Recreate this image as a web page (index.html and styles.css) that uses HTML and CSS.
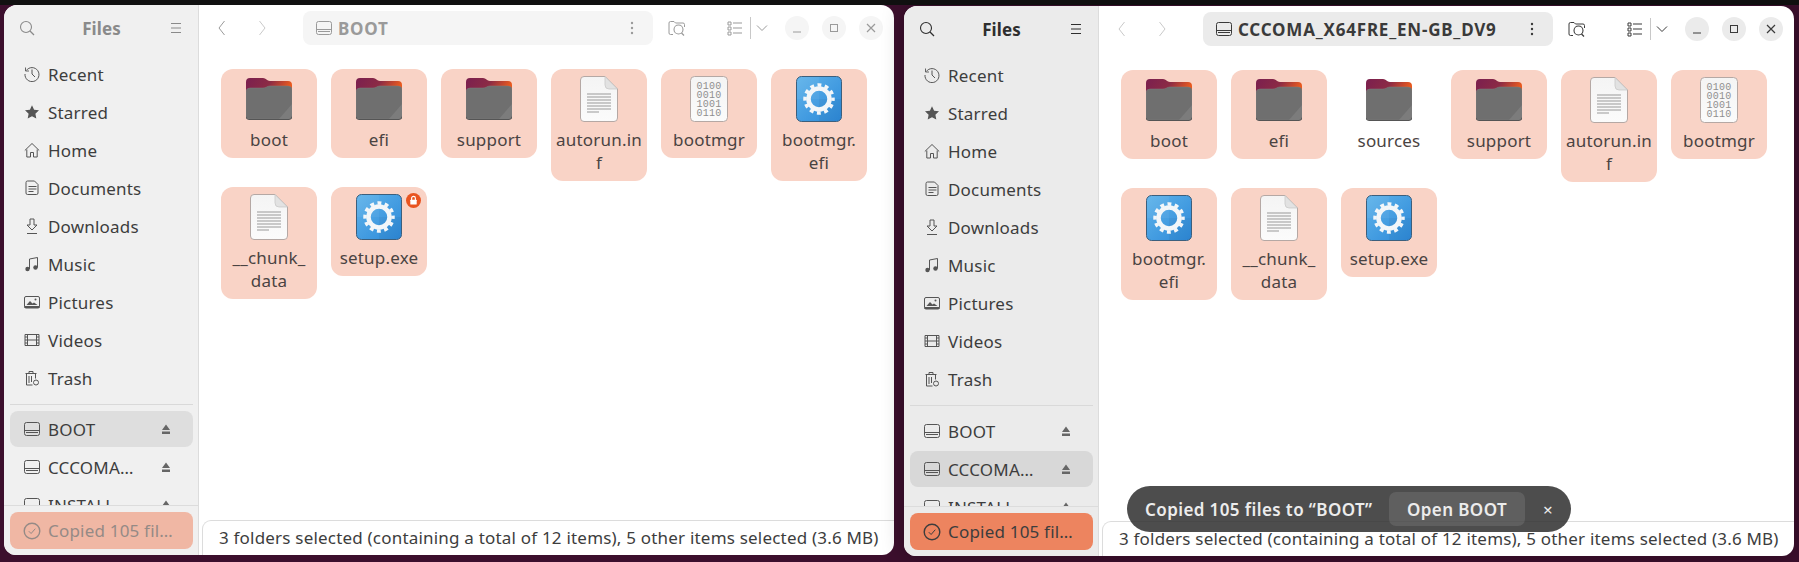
FILE: index.html
```html
<!DOCTYPE html>
<html lang="en">
<head>
    <meta charset="UTF-8">
    <meta name="viewport" content="width=device-width, initial-scale=1.0">
    <title>Files</title>
    <link rel="stylesheet" href="styles.css">
</head>
<body>
    <!-- shared icons -->
    <svg class="defs" width="0" height="0">
        <defs>
            <linearGradient id="folderBack" x1="0" y1="0" x2="1" y2="0.25">
                <stop offset="0" stop-color="#7a1f4f"/>
                <stop offset="0.55" stop-color="#8c2b45"/>
                <stop offset="1" stop-color="#ea5a1e"/>
            </linearGradient>
            <linearGradient id="gearBg" x1="0" y1="0" x2="1" y2="1">
                <stop offset="0" stop-color="#5fb3ea"/>
                <stop offset="1" stop-color="#2c89d9"/>
            </linearGradient>
            <linearGradient id="paper" x1="0" y1="0" x2="0" y2="1">
                <stop offset="0" stop-color="#f4f4f4"/>
                <stop offset="1" stop-color="#fbfbfb"/>
            </linearGradient>
        </defs>
        <symbol id="i-folder" viewBox="0 0 46 42">
            <path d="M0 4a4 4 0 0 1 4-4h13c3 0 4 3 7 3h18a4 4 0 0 1 4 4v12H0z" fill="url(#folderBack)"/>
            <path d="M0 14a4 4 0 0 1 4-4h13c3 0 4-2 7-2h18a4 4 0 0 1 4 4v26a3 3 0 0 1-3 3H3a3 3 0 0 1-3-3z" fill="#6f6f6f" stroke="#7d7d7d" stroke-width=".5"/>
            <path d="M46 26v12a3 3 0 0 1-3 3H33z" fill="#7c7c7c"/>
            <path d="M0 38.500a3 3 0 0 0 3 3h40a3 3 0 0 0 3-3" fill="none" stroke="#555" stroke-width="1"/>
        </symbol>
        <symbol id="i-text" viewBox="0 0 38 46">
            <path d="M4 .5h21L37.500 13v29a3.500 3.500 0 0 1-3.500 3.500H4A3.500 3.500 0 0 1 .5 42V4A3.500 3.500 0 0 1 4 .5z" fill="url(#paper)" stroke="#b5a8a4"/>
            <path d="M25 .5V9a4 4 0 0 0 4 4h8.500z" fill="#e2e2e2" stroke="#c4c4c4" stroke-width=".7"/>
            <path d="M7 18h24M7 21h24M7 24h24M7 27h24M7 30h24M7 33h24M7 36h12" stroke="#999" stroke-width="1"/>
        </symbol>
        <symbol id="i-sheet" viewBox="0 0 38 46">
            <rect x=".5" y=".5" width="37" height="45" rx="4" fill="url(#paper)" stroke="#b5a8a4"/>
        </symbol>
        <symbol id="i-exe" viewBox="0 0 46 46">
            <rect x=".5" y=".5" width="45" height="45" rx="5" fill="url(#gearBg)" stroke="#3c5f7d"/>
            <path d="M23 1v22H1V6a5 5 0 0 1 5-5z" fill="#fff" opacity=".05"/>
            <path d="M23 23h22v17a5 5 0 0 1-5 5H23z" fill="#000" opacity=".04"/>
            <circle cx="23" cy="23" r="10.500" fill="none" stroke="#f2f6f9" stroke-width="4.500"/>
            <circle cx="23" cy="23" r="14" fill="none" stroke="#f2f6f9" stroke-width="3.500" stroke-dasharray="3.900 3.430" stroke-dashoffset="1.950"/>
        </symbol>
        <symbol id="i-search" viewBox="0 0 16 16"><circle cx="7" cy="7" r="5.500" fill="none" stroke="currentColor" stroke-width="1.100"/><path d="M11 11l4 4" stroke="currentColor" stroke-width="1.300"/></symbol>
        <symbol id="i-menu" viewBox="0 0 16 16"><path d="M3 3.500h10M3 8h10M3 12.500h10" stroke="currentColor" stroke-width="1.100"/></symbol>
        <symbol id="i-recent" viewBox="0 0 16 16"><path d="M2.300 4.500A7 7 0 1 1 1 8" fill="none" stroke="currentColor"/><path d="M1.500 1.500v3.500H5" fill="none" stroke="currentColor" stroke-width=".9"/><path d="M8 3.500V8l3 3" fill="none" stroke="currentColor"/></symbol>
        <symbol id="i-star" viewBox="0 0 16 16"><path d="M8 1.200l2.100 4.500 4.900.6-3.600 3.400.9 4.900L8 12.200l-4.300 2.400.9-4.900L1 6.300l4.900-.6z" fill="currentColor"/></symbol>
        <symbol id="i-home" viewBox="0 0 16 16"><path d="M.8 8.500L8 1.500l7.200 7M2.800 7.500v7.500h3.700v-4.500h3V15h3.700V7.500" fill="none" stroke="currentColor"/></symbol>
        <symbol id="i-doc" viewBox="0 0 16 16"><path d="M3 1.500h7l3.500 3.500v8.500a1.500 1.500 0 0 1-1.500 1.500H3a1.500 1.500 0 0 1-1.500-1.500V3A1.500 1.500 0 0 1 3 1.500zM4 7h8M4 9.500h8M4 12h5" fill="none" stroke="currentColor" transform="translate(.5 -.5)"/></symbol>
        <symbol id="i-download" viewBox="0 0 16 16"><path d="M6 1h4v6h3l-5 5-5-5h3zM3 15.500h10" fill="none" stroke="currentColor"/></symbol>
        <symbol id="i-music" viewBox="0 0 16 16"><path d="M5.500 13V3l8-1.500V11.500" fill="none" stroke="currentColor"/><circle cx="3.500" cy="13" r="2.200" fill="currentColor"/><circle cx="11.500" cy="11.500" r="2.200" fill="currentColor"/></symbol>
        <symbol id="i-picture" viewBox="0 0 16 16"><rect x=".5" y="2.500" width="15" height="11.500" rx="1.500" fill="none" stroke="currentColor"/><path d="M2.500 11l3.500-4 2.500 2.500 1.500-1 3.500 2.500zM.5 12h15v2H.5z" fill="currentColor"/><circle cx="11.500" cy="5.500" r="1" fill="currentColor"/></symbol>
        <symbol id="i-video" viewBox="0 0 16 16"><path d="M1 2.500h14v11H1zM3.500 2.500v11M12.500 2.500v11M3.500 8h9M1 5h2.500M1 8h2.500M1 11h2.500M12.500 5H15M12.500 8H15M12.500 11H15" fill="none" stroke="currentColor"/></symbol>
        <symbol id="i-trash" viewBox="0 0 16 16"><path d="M1.500 3.500h11M5 3.500V1.500h4v2M2.500 3.500v11.500h6M11.500 3.500v5M5 6v7M7.500 6v6" fill="none" stroke="currentColor"/><circle cx="12" cy="12.500" r="2.500" fill="none" stroke="currentColor"/></symbol>
        <symbol id="i-drive" viewBox="0 0 16 16"><path d="M2.500 1.500h11a2 2 0 0 1 2 2v9a2 2 0 0 1-2 2h-11a2 2 0 0 1-2-2v-9a2 2 0 0 1 2-2zM.5 9.500h15M2 11.500h12" fill="none" stroke="currentColor"/></symbol>
        <symbol id="i-eject" viewBox="0 0 16 16"><path d="M8 3.500l4 5.500H4zM4 10.500h8V13H4z" fill="currentColor"/></symbol>
        <symbol id="i-check" viewBox="0 0 18 18"><circle cx="9" cy="9" r="7.800" fill="none" stroke="currentColor" stroke-width="1.400"/><path d="M5.800 9.200l2.300 2.300 4.200-4.800" fill="none" stroke="currentColor"/></symbol>
        <symbol id="i-back" viewBox="0 0 16 16"><path d="M10.500 1L5 8l5.500 7" fill="none" stroke="currentColor"/></symbol>
        <symbol id="i-forward" viewBox="0 0 16 16"><path d="M5.500 1L11 8l-5.500 7" fill="none" stroke="currentColor"/></symbol>
        <symbol id="i-more" viewBox="0 0 16 16"><circle cx="8" cy="3" r="1.200" fill="currentColor"/><circle cx="8" cy="8" r="1.200" fill="currentColor"/><circle cx="8" cy="13" r="1.200" fill="currentColor"/></symbol>
        <symbol id="i-camera" viewBox="0 0 18 16"><path d="M5 14.500H2.500a1.500 1.500 0 0 1-1.500-1.500V3a1.500 1.500 0 0 1 1.500-1.500h3.500l1.500 1.500h7.500a1.500 1.500 0 0 1 1.500 1.500V7" fill="none" stroke="currentColor"/><circle cx="10.500" cy="9.500" r="4.500" fill="none" stroke="currentColor" stroke-width="1.100"/><path d="M13.500 13l2.500 2.500" stroke="currentColor" stroke-width="1.300"/></symbol>
        <symbol id="i-list" viewBox="0 0 16 16"><path d="M1 2h3v3H1zM1 7h3v3H1zM1 12h3v3H1z" fill="none" stroke="currentColor" stroke-width="1"/><path d="M6 3h9M6 8h9M6 13h9" stroke="currentColor" stroke-width="1.100"/></symbol>
        <symbol id="i-chevron" viewBox="0 0 16 16"><path d="M3 5.500l5 5 5-5" fill="none" stroke="currentColor"/></symbol>
    </svg>

    <div class="topbar"></div>
    <div class="desktop">

        <!-- left window, not focused -->
        <section class="window inactive">
            <aside class="sidebar">
                <div class="side-head">
                    <svg class="ico"><use href="#i-search"/></svg>
                    <span class="app-title">Files</span>
                    <svg class="ico"><use href="#i-menu"/></svg>
                </div>
                <nav class="places">
                    <a class="place"><svg class="ico"><use href="#i-recent"/></svg><span>Recent</span></a>
                    <a class="place"><svg class="ico"><use href="#i-star"/></svg><span>Starred</span></a>
                    <a class="place"><svg class="ico"><use href="#i-home"/></svg><span>Home</span></a>
                    <a class="place"><svg class="ico"><use href="#i-doc"/></svg><span>Documents</span></a>
                    <a class="place"><svg class="ico"><use href="#i-download"/></svg><span>Downloads</span></a>
                    <a class="place"><svg class="ico"><use href="#i-music"/></svg><span>Music</span></a>
                    <a class="place"><svg class="ico"><use href="#i-picture"/></svg><span>Pictures</span></a>
                    <a class="place"><svg class="ico"><use href="#i-video"/></svg><span>Videos</span></a>
                    <a class="place"><svg class="ico"><use href="#i-trash"/></svg><span>Trash</span></a>
                    <hr class="side-sep">
                    <a class="place current"><svg class="ico"><use href="#i-drive"/></svg><span>BOOT</span><svg class="ico eject"><use href="#i-eject"/></svg></a>
                    <a class="place"><svg class="ico"><use href="#i-drive"/></svg><span>CCCOMA…</span><svg class="ico eject"><use href="#i-eject"/></svg></a>
                    <a class="place"><svg class="ico"><use href="#i-drive"/></svg><span>INSTALL</span><svg class="ico eject"><use href="#i-eject"/></svg></a>
                </nav>
                <div class="side-foot">
                    <div class="progress"><svg class="ico-check"><use href="#i-check"/></svg><span>Copied 105 fil…</span></div>
                </div>
            </aside>
            <main class="content">
                <header class="toolbar">
                    <svg class="ico nav-back"><use href="#i-back"/></svg>
                    <svg class="ico nav-forward"><use href="#i-forward"/></svg>
                    <div class="pathbar">
                        <svg class="ico"><use href="#i-drive"/></svg>
                        <span class="path-name">BOOT</span>
                        <svg class="ico path-more"><use href="#i-more"/></svg>
                    </div>
                    <svg class="ico-cam"><use href="#i-camera"/></svg>
                    <svg class="ico view-list"><use href="#i-list"/></svg>
                    <span class="view-sep"></span>
                    <svg class="ico view-drop"><use href="#i-chevron"/></svg>
                    <div class="win-btns">
                        <button class="win-btn"><svg viewBox="0 0 16 16"><path d="M4 12h8" stroke="currentColor"/></svg></button>
                        <button class="win-btn"><svg viewBox="0 0 16 16"><rect x="4.500" y="4.500" width="7" height="7" fill="none" stroke="currentColor"/></svg></button>
                        <button class="win-btn"><svg viewBox="0 0 16 16"><path d="M4 4l8 8M12 4l-8 8" stroke="currentColor" stroke-width="1.200"/></svg></button>
                    </div>
                </header>
                <div class="grid">
                    <div class="item sel"><svg class="thumb"><use href="#i-folder" width="46" height="42" y="1" x="1"/></svg><p>boot</p></div>
                    <div class="item sel"><svg class="thumb"><use href="#i-folder" width="46" height="42" y="1" x="1"/></svg><p>efi</p></div>
                    <div class="item sel"><svg class="thumb"><use href="#i-folder" width="46" height="42" y="1" x="1"/></svg><p>support</p></div>
                    <div class="item sel"><svg class="thumb"><use href="#i-text" width="38" height="46" x="5" y="-1"/></svg><p>autorun.in<br>f</p></div>
                    <div class="item sel">
                        <svg class="thumb"><use href="#i-sheet" width="38" height="46" x="5" y="-1"/><text class="bits" x="24" y="12">0100</text><text class="bits" x="24" y="21">0010</text><text class="bits" x="24" y="30">1001</text><text class="bits" x="24" y="39">0110</text></svg>
                        <p>bootmgr</p>
                    </div>
                    <div class="item sel"><svg class="thumb"><use href="#i-exe" width="46" height="46" x="1" y="-1"/></svg><p>bootmgr.<br>efi</p></div>
                    <div class="item sel"><svg class="thumb"><use href="#i-text" width="38" height="46" x="5" y="-1"/></svg><p>__chunk_<br>data</p></div>
                    <div class="item sel">
                        <svg class="thumb"><use href="#i-exe" width="46" height="46" x="1" y="-1"/></svg><p>setup.exe</p>
                        <svg class="lock" viewBox="0 0 16 16"><circle cx="8" cy="8" r="8" fill="#e95420"/><rect x="4.600" y="7.200" width="6.800" height="5" rx=".6" fill="#fff"/><path d="M6 7.500V5.600a2 2 0 0 1 4 0v1.900" fill="none" stroke="#fff" stroke-width="1.200"/></svg>
                    </div>
                </div>
                <div class="statusbar">3 folders selected (containing a total of 12 items), 5 other items selected (3.6 MB)</div>
            </main>
        </section>

        <!-- right window, focused -->
        <section class="window active">
            <aside class="sidebar">
                <div class="side-head">
                    <svg class="ico"><use href="#i-search"/></svg>
                    <span class="app-title">Files</span>
                    <svg class="ico"><use href="#i-menu"/></svg>
                </div>
                <nav class="places">
                    <a class="place"><svg class="ico"><use href="#i-recent"/></svg><span>Recent</span></a>
                    <a class="place"><svg class="ico"><use href="#i-star"/></svg><span>Starred</span></a>
                    <a class="place"><svg class="ico"><use href="#i-home"/></svg><span>Home</span></a>
                    <a class="place"><svg class="ico"><use href="#i-doc"/></svg><span>Documents</span></a>
                    <a class="place"><svg class="ico"><use href="#i-download"/></svg><span>Downloads</span></a>
                    <a class="place"><svg class="ico"><use href="#i-music"/></svg><span>Music</span></a>
                    <a class="place"><svg class="ico"><use href="#i-picture"/></svg><span>Pictures</span></a>
                    <a class="place"><svg class="ico"><use href="#i-video"/></svg><span>Videos</span></a>
                    <a class="place"><svg class="ico"><use href="#i-trash"/></svg><span>Trash</span></a>
                    <hr class="side-sep">
                    <a class="place"><svg class="ico"><use href="#i-drive"/></svg><span>BOOT</span><svg class="ico eject"><use href="#i-eject"/></svg></a>
                    <a class="place current"><svg class="ico"><use href="#i-drive"/></svg><span>CCCOMA…</span><svg class="ico eject"><use href="#i-eject"/></svg></a>
                    <a class="place"><svg class="ico"><use href="#i-drive"/></svg><span>INSTALL</span><svg class="ico eject"><use href="#i-eject"/></svg></a>
                </nav>
                <div class="side-foot">
                    <div class="progress"><svg class="ico-check"><use href="#i-check"/></svg><span>Copied 105 fil…</span></div>
                </div>
            </aside>
            <main class="content">
                <header class="toolbar">
                    <svg class="ico nav-back"><use href="#i-back"/></svg>
                    <svg class="ico nav-forward"><use href="#i-forward"/></svg>
                    <div class="pathbar">
                        <svg class="ico"><use href="#i-drive"/></svg>
                        <span class="path-name">CCCOMA_X64FRE_EN-GB_DV9</span>
                        <svg class="ico path-more"><use href="#i-more"/></svg>
                    </div>
                    <svg class="ico-cam"><use href="#i-camera"/></svg>
                    <svg class="ico view-list"><use href="#i-list"/></svg>
                    <span class="view-sep"></span>
                    <svg class="ico view-drop"><use href="#i-chevron"/></svg>
                    <div class="win-btns">
                        <button class="win-btn"><svg viewBox="0 0 16 16"><path d="M4 12h8" stroke="currentColor"/></svg></button>
                        <button class="win-btn"><svg viewBox="0 0 16 16"><rect x="4.500" y="4.500" width="7" height="7" fill="none" stroke="currentColor"/></svg></button>
                        <button class="win-btn"><svg viewBox="0 0 16 16"><path d="M4 4l8 8M12 4l-8 8" stroke="currentColor" stroke-width="1.200"/></svg></button>
                    </div>
                </header>
                <div class="grid">
                    <div class="item sel"><svg class="thumb"><use href="#i-folder" width="46" height="42" y="1" x="1"/></svg><p>boot</p></div>
                    <div class="item sel"><svg class="thumb"><use href="#i-folder" width="46" height="42" y="1" x="1"/></svg><p>efi</p></div>
                    <div class="item"><svg class="thumb"><use href="#i-folder" width="46" height="42" y="1" x="1"/></svg><p>sources</p></div>
                    <div class="item sel"><svg class="thumb"><use href="#i-folder" width="46" height="42" y="1" x="1"/></svg><p>support</p></div>
                    <div class="item sel"><svg class="thumb"><use href="#i-text" width="38" height="46" x="5" y="-1"/></svg><p>autorun.in<br>f</p></div>
                    <div class="item sel">
                        <svg class="thumb"><use href="#i-sheet" width="38" height="46" x="5" y="-1"/><text class="bits" x="24" y="12">0100</text><text class="bits" x="24" y="21">0010</text><text class="bits" x="24" y="30">1001</text><text class="bits" x="24" y="39">0110</text></svg>
                        <p>bootmgr</p>
                    </div>
                    <div class="item sel"><svg class="thumb"><use href="#i-exe" width="46" height="46" x="1" y="-1"/></svg><p>bootmgr.<br>efi</p></div>
                    <div class="item sel"><svg class="thumb"><use href="#i-text" width="38" height="46" x="5" y="-1"/></svg><p>__chunk_<br>data</p></div>
                    <div class="item sel"><svg class="thumb"><use href="#i-exe" width="46" height="46" x="1" y="-1"/></svg><p>setup.exe</p></div>
                </div>
                <div class="statusbar">3 folders selected (containing a total of 12 items), 5 other items selected (3.6 MB)</div>
            </main>
            <div class="toast">
                <span class="toast-msg">Copied 105 files to “BOOT”</span>
                <button class="toast-btn">Open BOOT</button>
                <span class="toast-close">×</span>
            </div>
        </section>
    </div>
</body>
</html>
```

FILE: styles.css
```css
* {
    box-sizing: border-box;
}
html, body {
    height: 100%;
}
body {
    margin: 0;
    overflow: hidden;
    background-color: #3c0f2d;
    font-family: "Noto Sans", sans-serif;
    font-size: 17px;
    letter-spacing: .2px;
    color: #3d3d3d;
}
.defs {
    position: absolute;
}
.bits {
    font-family: "Liberation Mono", monospace;
    font-size: 10px;
    letter-spacing: .3px;
    fill: #8f8f8f;
    text-anchor: middle;
}
.topbar {
    height: 5px;
    background-color: #111;
}
.desktop {
    display: flex;
    gap: 10px;
    padding: 0 5px 0 4px;
}
.window {
    position: relative;
    display: flex;
    width: 890px;
    height: 550px;
    border-radius: 13px 13px 12px 12px;
    overflow: hidden;
    background-color: #fff;
}
.window.active {
    margin-top: 1px;
    box-shadow: 0 0 22px rgba(0, 0, 0, .28);
}

/* sidebar */
.sidebar {
    display: flex;
    flex-direction: column;
    width: 195px;
    flex-shrink: 0;
    border-right: 1px solid #dcdcdc;
    background-color: #f0f0f0;
}
.active .sidebar {
    background-color: #ebebeb;
}
.ico {
    width: 16px;
    height: 16px;
    flex-shrink: 0;
}
.side-head {
    display: flex;
    align-items: center;
    justify-content: space-between;
    height: 46px;
    padding: 0 14px 0 15px;
    color: #2e2e2e;
}
.app-title {
    font-weight: 700;
    letter-spacing: .1px;
}
.inactive .side-head {
    color: #8a8a8a;
}
.places {
    flex: 1;
    height: 0;
    overflow: hidden;
    padding: 4px 5px 0 6px;
}
.place {
    display: flex;
    align-items: center;
    height: 38px;
    padding: 0 19px 0 14px;
    border-radius: 8px;
    gap: 8px;
}
.place .ico {
    color: #555;
}
.place span {
    flex: 1;
    white-space: nowrap;
}
.place .eject {
    color: #666;
}
.place.current {
    height: 36px;
    margin: 1px 0;
    background-color: #dedede;
}
.active .place.current {
    background-color: #d8d8d8;
}
.side-sep {
    height: 1px;
    margin: 7px 0 6px;
    border: 0;
    background-color: #d9d9d9;
}
.side-foot {
    height: 50px;
    flex-shrink: 0;
    padding: 6px 5px 0 6px;
    border-top: 1px solid #dcdcdc;
}
.progress {
    display: flex;
    align-items: center;
    gap: 7px;
    height: 37px;
    padding: 0 4px 0 13px;
    border-radius: 8px;
    background-color: #ed845f;
    white-space: nowrap;
}
.inactive .progress {
    background-color: #f0b7a4;
    color: #958a86;
}
.ico-check {
    width: 18px;
    height: 18px;
    flex-shrink: 0;
}

/* main pane */
.content {
    position: relative;
    flex: 1;
    min-width: 0;
    display: flex;
    flex-direction: column;
}
.toolbar {
    display: flex;
    align-items: center;
    height: 46px;
    color: #3a3a3a;
}
.inactive .toolbar {
    color: #9a9a9a;
}
.nav-back {
    margin-left: 15px;
}
.nav-forward {
    margin-left: 24px;
}
.active .nav-back, .active .nav-forward {
    color: #c9c9c9;
}
.inactive .nav-forward {
    color: #c9c9c9;
}
.pathbar {
    display: flex;
    align-items: center;
    width: 350px;
    height: 34px;
    margin-left: 33px;
    padding: 0 13px;
    gap: 6px;
    border-radius: 8px;
    background-color: #f5f5f5;
}
.active .pathbar {
    background-color: #ebebeb;
}
.path-name {
    flex: 1;
    font-weight: 700;
    letter-spacing: .8px;
    white-space: nowrap;
}
.ico-cam {
    width: 18px;
    height: 16px;
    margin-left: 15px;
}
.view-list {
    margin-left: 41px;
}
.view-sep {
    width: 1px;
    height: 22px;
    margin: 0 3px 0 7px;
    background-color: #c8c8c8;
}
.win-btns {
    display: flex;
    gap: 13px;
    margin-left: 15px;
}
.win-btn {
    width: 24px;
    height: 24px;
    padding: 4px;
    border: 0;
    border-radius: 50%;
    background-color: #ebebeb;
    color: inherit;
}
.win-btn svg {
    display: block;
    width: 16px;
    height: 16px;
}
.inactive .win-btn {
    background-color: #f5f5f5;
}

/* icon grid */
.grid {
    flex: 1;
    display: grid;
    grid-template-columns: repeat(6, 96px);
    column-gap: 14px;
    row-gap: 6px;
    align-content: start;
    align-items: start;
    padding: 18px 0 0 22px;
}
.item {
    position: relative;
    display: flex;
    flex-direction: column;
    align-items: center;
    padding: 8px 0 7px;
    border-radius: 12px;
    color: #4a4342;
}
.item.sel {
    background-color: #f9d3c6;
}
.item p {
    margin: 3px 0 0;
    line-height: 23px;
    text-align: center;
}
.thumb {
    width: 48px;
    height: 48px;
    overflow: visible;
}
.lock {
    position: absolute;
    top: 6px;
    right: 6px;
    width: 15px;
    height: 15px;
}
.statusbar {
    height: 35px;
    margin-left: 3px;
    padding: 5px 16px 0;
    border: 1px solid #dcdcdc;
    border-width: 1px 0 0 1px;
    border-radius: 9px 0 0 0;
    white-space: nowrap;
}

/* notification over the status bar */
.toast {
    position: absolute;
    top: 480px;
    left: 50%;
    transform: translateX(-50%);
    display: flex;
    align-items: center;
    width: 444px;
    height: 46px;
    padding-left: 18px;
    border-radius: 23px;
    background-color: rgba(48, 48, 48, .86);
    color: #ececec;
    font-weight: 600;
    letter-spacing: .4px;
}
.toast-msg {
    flex: 1;
    white-space: nowrap;
}
.toast-btn {
    flex-shrink: 0;
    width: 136px;
    height: 34px;
    border: 0;
    border-radius: 7px;
    background-color: rgba(255, 255, 255, .1);
    color: inherit;
    font: inherit;
    letter-spacing: inherit;
    white-space: nowrap;
}
.toast-close {
    flex-shrink: 0;
    width: 46px;
    text-align: center;
    font-weight: 400;
}
```
